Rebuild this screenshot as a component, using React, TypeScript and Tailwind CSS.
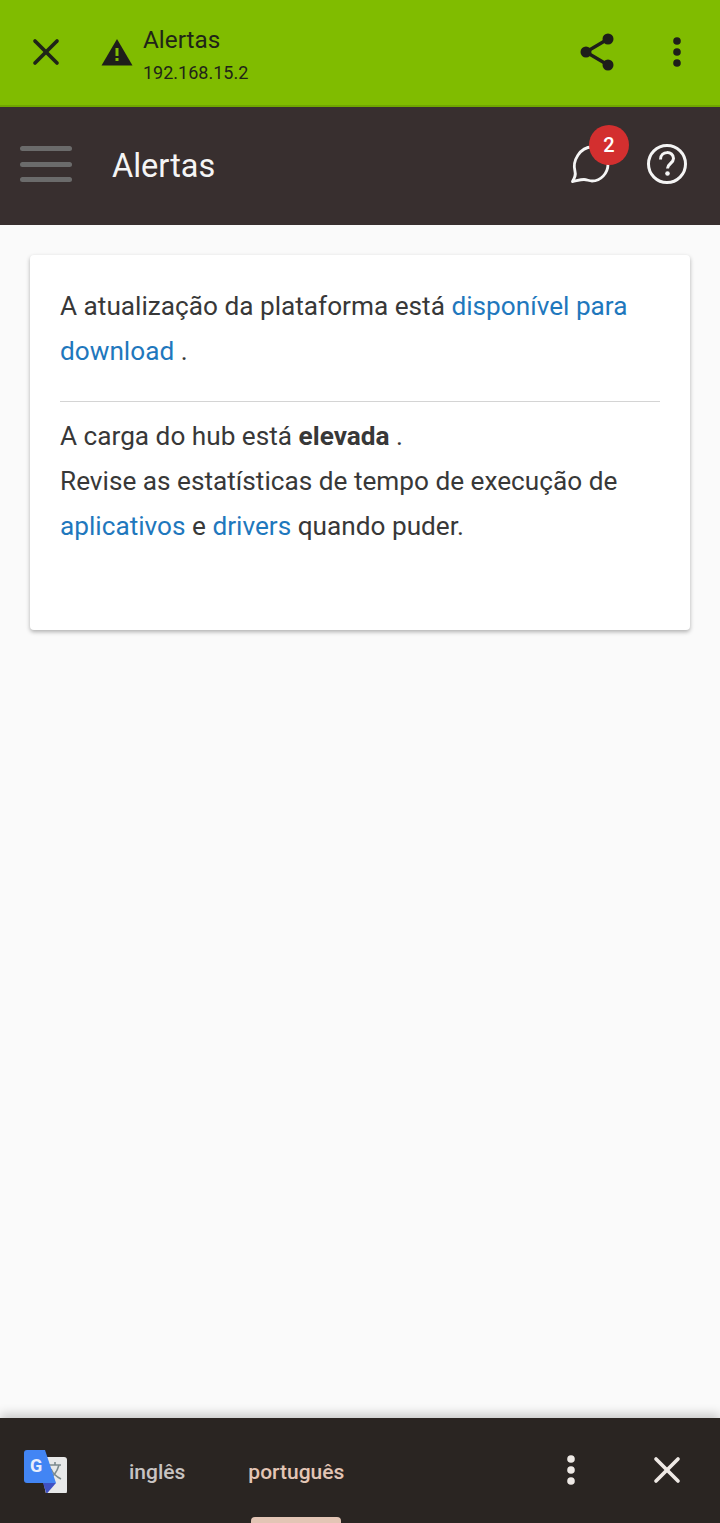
import { X } from 'lucide-react';

const font = { fontFamily: 'Roboto, sans-serif' };

function TranslateLogo() {
  return (
    <svg width="44" height="44" viewBox="0 0 44 44">
      <path d="M14 8h26a3 3 0 0 1 3 3v31a3 3 0 0 1-3 3H22z" fill="#e8e9e9" />
      <path d="M25 16h12M31 13v3M35 16c-2 7-6 12-11 14M27 20c2 5 6 8 10 10" stroke="#7d8b8d" strokeWidth="1.6" fill="none" />
      <path d="M19 34h13l-9.500 11z" fill="#3f51c4" />
      <path d="M3 1h18l11 33H3a3 3 0 0 1-3-3V4a3 3 0 0 1 3-3z" fill="#4285f4" />
      <text x="6" y="23" fontSize="18" fontWeight="700" fill="#e8eefc" fontFamily="Roboto, sans-serif">G</text>
    </svg>
  );
}

export default function App() {
  return (
    <div className="flex h-[1523px] w-[720px] flex-col overflow-hidden bg-[#fafafa]" style={font}>
      {/* browser bar */}
      <div className="flex h-[107px] shrink-0 items-center border-b-2 border-[#70a600] bg-[#80bc00] text-[#1f2418]">
        <X size={44} strokeWidth={2} className="mb-[1px] ml-[24px] shrink-0" />
        <svg width="34" height="34" viewBox="0 0 34 34" className="ml-[32px] shrink-0">
          <path d="M17 3 32.500 29.500h-31z" fill="#1e1e1a" />
          <path d="M15.500 12h3v8h-3zM15.500 22h3v3h-3z" fill="#80bc00" />
        </svg>
        <div className="ml-[9px] mt-[5px] flex flex-col">
          <span className="text-[24.300px] leading-[28px]">Alertas</span>
          <span className="mt-[7px] text-[18px] leading-[24px]">192.168.15.2</span>
        </div>
        <svg width="38" height="38" viewBox="0 0 38 38" className="mb-[2px] ml-auto mr-[-2px] shrink-0">
          <path d="M30 6 8 19l22 13" stroke="#1e1e1a" strokeWidth="3.400" fill="none" />
          <circle cx="8" cy="19" r="5.500" fill="#1e1e1a" />
          <circle cx="30" cy="6" r="5.500" fill="#1e1e1a" />
          <circle cx="30" cy="32" r="5.500" fill="#1e1e1a" />
        </svg>
        <svg width="12" height="34" viewBox="0 0 12 34" className="mb-[2px] ml-[57px] mr-[37px] shrink-0">
          <circle cx="6" cy="6" r="3.800" fill="#1e1e1a" />
          <circle cx="6" cy="17" r="3.800" fill="#1e1e1a" />
          <circle cx="6" cy="28" r="3.800" fill="#1e1e1a" />
        </svg>
      </div>

      {/* app header */}
      <div className="flex h-[118px] shrink-0 items-center bg-[#382f2f]">
        <div className="mb-[4px] ml-5 flex w-[52px] flex-col gap-[10.500px]">
          <span className="h-[5px] rounded-full bg-[#6b6b6b]" />
          <span className="h-[5px] rounded-full bg-[#6b6b6b]" />
          <span className="h-[5px] rounded-full bg-[#6b6b6b]" />
        </div>
        <span className="ml-10 text-[32.500px] leading-none text-[#f5f5f5]">Alertas</span>
        <div className="relative ml-auto h-[44px] w-[44px]">
          <svg width="44" height="44" viewBox="0 0 44 44" fill="none">
            <path
              d="M2.500 37.500C5 33 6 31 5 27.500 2 17 10 3 22 3c9 0 16 8 16 17s-7 17-16 17c-3 0-5-1.500-8-1.500-4 0-8 1.500-11.500 2z"
              stroke="#f5f5f5"
              strokeWidth="2.800"
              strokeLinejoin="round"
            />
          </svg>
          <span className="absolute left-[19px] top-[-19px] flex h-10 w-10 items-center justify-center rounded-full bg-[#d32f2f] text-xl font-medium text-white">2</span>
        </div>
        <svg width="42" height="42" viewBox="0 0 42 42" fill="none" className="mb-[5px] ml-[32px] mr-[32px]">
          <circle cx="21" cy="21" r="18.500" stroke="#f5f5f5" strokeWidth="3" />
          <path d="M14.500 16.500c0-9 13-9 13-1 0 5-6 5-6 10" stroke="#f5f5f5" strokeWidth="3" />
          <circle cx="21.500" cy="30.500" r="2.300" fill="#f5f5f5" />
        </svg>
      </div>

      {/* alerts card */}
      <div className="flex-1 p-[30px]">
        <div className="h-[375px] rounded bg-white px-[30px] pt-[29px] text-[26.200px] leading-[45px] text-[#383838] shadow-[0_2px_4px_rgba(0,0,0,0.3)]">
          <p>
            A atualização da plataforma está <a className="text-[#1f78bd]">disponível para download</a> .
          </p>
          <hr className="mt-[27px] border-[#d4d4d4]" />
          <p className="mt-[12px]">
            A carga do hub está <b className="font-bold">elevada</b> .
            <br />
            Revise as estatísticas de tempo de execução de <a className="text-[#1f78bd]">aplicativos</a> e{' '}
            <a className="text-[#1f78bd]">drivers</a> quando puder.
          </p>
        </div>
      </div>

      {/* translate bar */}
      <div className="relative flex h-[105px] shrink-0 items-center bg-[#2a2522] shadow-[0_-4px_10px_rgba(0,0,0,0.2)]">
        <div className="ml-[24px] shrink-0">
          <TranslateLogo />
        </div>
        <span className="ml-[61px] mt-[3px] text-[21px] font-medium leading-none text-[#c8c4c2]">inglês</span>
        <span className="ml-[63px] mt-[3px] text-[21px] font-medium leading-none text-[#e3c5b5]">português</span>
        <svg width="12" height="34" viewBox="0 0 12 34" className="ml-auto mb-[1px] shrink-0">
          <circle cx="6" cy="6" r="3.800" fill="#eee9e5" />
          <circle cx="6" cy="17" r="3.800" fill="#eee9e5" />
          <circle cx="6" cy="28" r="3.800" fill="#eee9e5" />
        </svg>
        <X size={44} strokeWidth={2} className="mb-[1px] ml-[68px] mr-[31px] text-[#eee9e5]" />
        <span className="absolute bottom-0 left-[251px] h-[6px] w-[90px] rounded-t bg-[#e3c5b5]" />
      </div>
    </div>
  );
}
